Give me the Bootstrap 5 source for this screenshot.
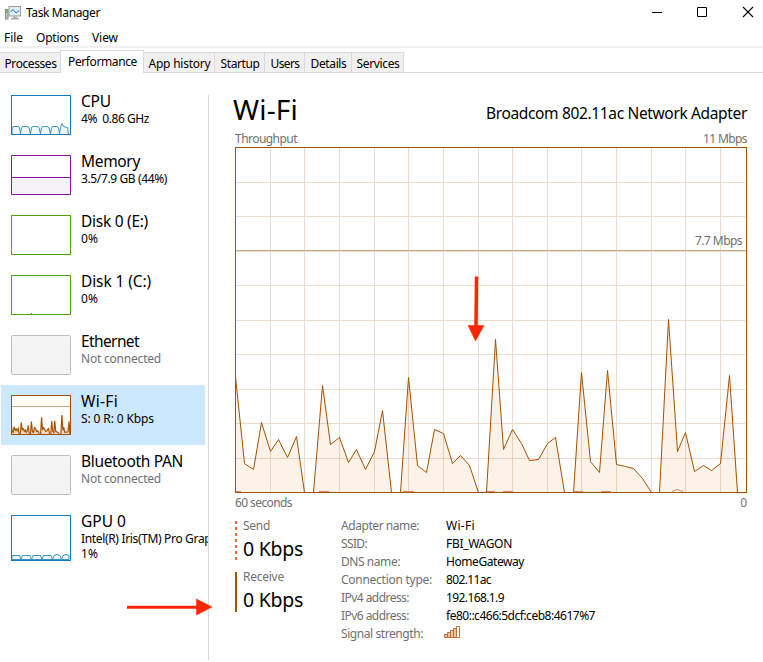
<!DOCTYPE html>
<html lang="en">
<head>
<meta charset="utf-8">
<meta name="viewport" content="width=device-width, initial-scale=1">
<title>Task Manager</title>
<link href="https://cdn.jsdelivr.net/npm/bootstrap@5.3.0/dist/css/bootstrap.min.css" rel="stylesheet">
<style>
body{font:12px/16px "Noto Sans","Open Sans",sans-serif;color:#000;background:#fff;width:763px;height:662px;overflow:hidden;position:relative}
svg{display:block;flex:none}
[data-w]{white-space:nowrap;display:inline-block}
.titlebar{height:24px;padding:0 0 0 5px}
.titlebar .app-icon{margin-top:2px}
.titlebar .app-name{margin-left:5px;padding-top:2px}
.win-buttons{gap:34px;padding-right:9px}
.menubar{height:24px;border-bottom:2px solid #f0f0f0;padding-left:4px;align-items:center;gap:13px;padding-top:6px}
.tabs{height:25px;border-bottom:1px solid #d9d9d9;align-items:flex-end}
.tabs .nav-link{padding:0 0 0 1px;height:20px;line-height:21px;color:#000;background:#f0f0f0;border:1px solid #d9d9d9;border-width:1px 1px 0 0;border-radius:0;text-align:center}
.tabs .nav-link.active{height:23px;background:#fff;margin-bottom:-1px;border-width:1px 1px 0 1px;margin-left:-1px}
.side{width:209px;height:565px;margin-top:22px;border-right:1px solid #d9d9d9;overflow:hidden}
.side .metric{height:60px;width:204px;margin-left:1px;padding-left:10px;gap:10px}
.metric.selected{background:#cce8ff}
.metric svg{margin-top:10px}
.metric-text{padding-top:7px}
.metric-name{font-size:15.5px;line-height:19px}
.metric-info{line-height:15px}
.side-wrap{margin-top:-10px}
.dim{color:#707070}
.main{margin-left:26px;width:512px}
.head{height:57px}
.big{font-size:28px;line-height:34px;margin-left:-2px}
.adapter{font-size:15.5px;line-height:20px;margin-bottom:3px}
.axis{height:17px;line-height:17px}
.chart{position:relative}
.chart .peak{position:absolute;right:5px;top:86px}
.below{height:19px;line-height:19px}
.rates{width:106px;padding-top:9px}
.rate{height:40px;padding-left:6px;margin-bottom:11px;border-left:2px solid #a65100}
.rate.send{border:0;padding-left:8px;background:repeating-linear-gradient(#e06f38 0 3px,transparent 3px 6px) 0 0/2px 100% no-repeat}
.rate .kind{line-height:9px}
.rate .speed{font-size:19.5px;line-height:24px;margin-top:7px}
.facts{padding-top:5px;grid-template-columns:105px auto;grid-auto-rows:18px;line-height:18px}
.signal{margin:1px 0 0 -2px}
.arrows{position:absolute;left:0;top:0;pointer-events:none}
</style>
<script src="https://cdn.jsdelivr.net/npm/bootstrap@5.3.0/dist/js/bootstrap.bundle.min.js"></script>
</head>
<body>
<header>
  <div class="titlebar d-flex align-items-center">
    <svg class="app-icon" width="16" height="16" viewBox="0 0 16 16"><rect x=".5" y="4.500" width="2.500" height="9.500" fill="#c8c8c8" stroke="#8b8b8b"/><path d="M1 6.500h2" stroke="#36d63a" stroke-width="2"/><rect x="4" y="1.500" width="11.500" height="9.500" fill="#e6e6e6" stroke="#9d9d9d"/><rect x="5.500" y="3" width="8.500" height="6.500" fill="#d9effb"/><path d="M5.500 7 8 4.500l3 3.500 3-2.500" fill="none" stroke="#237cae"/><path d="M8 11.500h4v1.500h2v1.500H6V13h2z" fill="#aaa"/></svg>
    <span class="app-name" data-w="73">Task Manager</span>
    <div class="win-buttons d-flex ms-auto">
      <svg width="12" height="12"><path d="M2 6.500h10" stroke="#000"/></svg>
      <svg width="12" height="12"><path d="M1.500 1.500h9v9h-9z" fill="none" stroke="#000"/></svg>
      <svg width="12" height="12"><path d="M1 1l10 10M11 1 1 11" stroke="#000" stroke-width="1.100"/></svg>
    </div>
  </div>
  <div class="menubar d-flex"><span data-w="18">File</span><span data-w="42">Options</span><span data-w="25">View</span></div>
  <nav class="nav tabs flex-nowrap">
    <a class="nav-link" style="width:61px"><span data-w="51">Processes</span></a>
    <a class="nav-link active" style="width:84px"><span data-w="68">Performance</span></a>
    <a class="nav-link" style="width:71px"><span data-w="61">App history</span></a>
    <a class="nav-link" style="width:50px"><span data-w="38">Startup</span></a>
    <a class="nav-link" style="width:40px"><span data-w="28">Users</span></a>
    <a class="nav-link" style="width:47px"><span data-w="35">Details</span></a>
    <a class="nav-link" style="width:52px"><span data-w="42">Services</span></a>
  </nav>
</header>
<div class="d-flex">
  <aside class="side"><div class="side-wrap">
    <div class="metric d-flex"><svg width="60" height="40"><path d="M1 32.500l2-1h4l1.500 1 1 6.500 1-6.500 1.500-1h4l2 1 1.500 6.500 1-6.500 1.500-1h4l2 1 1.500 6.500 1-6.500 1.500-1h4l2 1 1.500 6.500 1-6.500 1.500-1h4l1.500 1 1 6.500 1-6.500 1.500-4 1.500 3 4 1 1 7.500H1z" fill="#f1f6fa" stroke="#3a93c2"/><rect x=".5" y=".5" width="59" height="39" fill="none" stroke="#117dbb"/></svg>
      <div class="metric-text"><div class="metric-name"><span data-w="29">CPU</span></div><div class="metric-info"><span data-w="67">4%&nbsp; 0.86 GHz</span></div></div></div>
    <div class="metric d-flex"><svg width="60" height="40"><path d="M1 22.500h58v17H1z" fill="#f4f2f4"/><path d="M.5.500h59v39H.5zM1 22.500h58" fill="none" stroke="#8b12ae"/></svg>
      <div class="metric-text"><div class="metric-name"><span data-w="58">Memory</span></div><div class="metric-info"><span data-w="85">3.5/7.9 GB (44%)</span></div></div></div>
    <div class="metric d-flex"><svg width="60" height="40"><rect x=".5" y=".5" width="59" height="39" fill="#fff" stroke="#4da60c"/></svg>
      <div class="metric-text"><div class="metric-name"><span data-w="66">Disk 0 (E:)</span></div><div class="metric-info"><span data-w="16">0%</span></div></div></div>
    <div class="metric d-flex"><svg width="60" height="40"><rect x=".5" y=".5" width="59" height="39" fill="#fff" stroke="#4da60c"/><path d="M20 38.500h1" stroke="#4da60c"/></svg>
      <div class="metric-text"><div class="metric-name"><span data-w="69">Disk 1 (C:)</span></div><div class="metric-info"><span data-w="16">0%</span></div></div></div>
    <div class="metric d-flex"><svg width="60" height="40"><rect x=".5" y=".5" width="59" height="39" rx="1" fill="#f4f4f4" stroke="#bfbfbf"/></svg>
      <div class="metric-text"><div class="metric-name"><span data-w="57">Ethernet</span></div><div class="metric-info dim"><span data-w="79">Not connected</span></div></div></div>
    <div class="metric selected d-flex"><svg width="60" height="40"><rect width="60" height="40" fill="#fff"/><g transform="scale(.1174 .1156)"><use href="#traffic" fill="#f0d8c5" stroke="#a65100" stroke-width="10"/></g><path d="M1 11.500h58" stroke="#d3a682"/><rect x=".5" y=".5" width="59" height="39" fill="none" stroke="#a65100"/></svg>
      <div class="metric-text"><div class="metric-name"><span data-w="36">Wi-Fi</span></div><div class="metric-info"><span data-w="72">S: 0 R: 0 Kbps</span></div></div></div>
    <div class="metric d-flex"><svg width="60" height="40"><rect x=".5" y=".5" width="59" height="39" rx="1" fill="#f4f4f4" stroke="#bfbfbf"/></svg>
      <div class="metric-text"><div class="metric-name"><span data-w="101">Bluetooth PAN</span></div><div class="metric-info dim"><span data-w="79">Not connected</span></div></div></div>
    <div class="metric d-flex"><svg width="60" height="46"><path d="M1 40.500h7.500l1.500 4 1.500-4h7.500l1.500 4 1.500-4h7.500l1.500 4 1.500-4h7.500l1.500 4 1.500-4 3-1 3 1 1.500 4 1.500-4 3-1 3 1v4H1z" fill="#f1f6fa" stroke="#3a93c2"/><rect x=".5" y=".5" width="59" height="45" fill="none" stroke="#117dbb"/></svg>
      <div class="metric-text"><div class="metric-name"><span data-w="44">GPU 0</span></div><div class="metric-info"><span data-w="150">Intel(R) Iris(TM) Pro Graphics</span></div><div class="metric-info"><span data-w="16">1%</span></div></div></div>
  </div></aside>
  <main class="main">
    <div class="head d-flex justify-content-between align-items-end pb-1"><span class="big" data-w="64">Wi-Fi</span><span class="adapter" data-w="260">Broadcom 802.11ac Network Adapter</span></div>
    <div class="axis dim d-flex justify-content-between"><span data-w="61">Throughput</span><span data-w="43">11 Mbps</span></div>
    <div class="chart">
      <svg width="512" height="346">
        <defs><path id="traffic" transform="translate(-234.500 -146.500)" d="M235 376 244 463 253 469 261 422 270 451 278 439 287 457 296 436 304 492H313L322 385 330 444 339 437 348 462 356 449 365 469 374 451 382 410 391 492H400L408 377 417 465 426 472 434 429 443 433 452 463 460 455 469 465 478 492H486L495 339 503 449 512 429 521 443 529 460 538 459 547 443 555 437 564 492H573L581 372 590 461 599 472 607 370 616 464 625 466 633 468 642 478 651 492H659L668 319 677 451 685 432 694 471 703 465 711 470 720 463 729 375 737 492H235Z"/></defs>
        <path d="M35.500 1v344M69.500 1v344M104.500 1v344M139.500 1v344M173.500 1v344M208.500 1v344M243.500 1v344M277.500 1v344M312.500 1v344M346.500 1v344M381.500 1v344M416.500 1v344M450.500 1v344M485.500 1v344M1 35.500h509M1 69.500h509M1 104.500h509M1 138.500h509M1 173.500h509M1 207.500h509M1 242.500h509M1 276.500h509M1 311.500h509" stroke="#eadccf"/>
        <use href="#traffic" fill="#e07b22" fill-opacity=".1" stroke="#a65100"/>
        <path d="M1 103.500h510" stroke="#d3a682"/>
        <path d="M1 344.500h5m78 0h10m74 0h11m73 0h8m8 0h10m60 0h10m18 0h10m61 0 5-2 6 2" fill="none" stroke="#dc8560"/>
        <rect x=".5" y=".5" width="511" height="345" fill="none" stroke="#a65100"/>
      </svg>
      <span class="peak dim" data-w="46">7.7 Mbps</span>
    </div>
    <div class="below dim d-flex justify-content-between"><span data-w="56">60 seconds</span><span>0</span></div>
    <div class="d-flex">
      <div class="rates">
        <div class="rate send"><div class="kind dim"><span data-w="26">Send</span></div><div class="speed"><span data-w="59">0 Kbps</span></div></div>
        <div class="rate"><div class="kind dim"><span data-w="40">Receive</span></div><div class="speed"><span data-w="59">0 Kbps</span></div></div>
      </div>
      <div class="facts d-grid">
        <span class="dim"><span data-w="77">Adapter name:</span></span><span><span data-w="28">Wi-Fi</span></span>
        <span class="dim"><span data-w="25">SSID:</span></span><span><span data-w="65">FBI_WAGON</span></span>
        <span class="dim"><span data-w="58">DNS name:</span></span><span><span data-w="77">HomeGateway</span></span>
        <span class="dim"><span data-w="90">Connection type:</span></span><span><span data-w="44">802.11ac</span></span>
        <span class="dim"><span data-w="67">IPv4 address:</span></span><span><span data-w="57">192.168.1.9</span></span>
        <span class="dim"><span data-w="67">IPv6 address:</span></span><span><span data-w="148">fe80::c466:5dcf:ceb8:4617%7</span></span>
        <span class="dim"><span data-w="81">Signal strength:</span></span>
        <svg class="signal" width="16" height="12"><path d="M.5 8.500h3v3h-3zM3.500 6.500h3v5h-3zM6.500 4.500h3v7h-3zM9.500 2.500h3v9h-3z" fill="#e2c3aa" stroke="#b9723a"/><path d="M12.500.5h3v11h-3z" fill="#fff" stroke="#b9723a"/></svg>
      </div>
    </div>
  </main>
</div>
<svg class="arrows" width="763" height="662"><g fill="#ff2600" stroke="#ff2600"><path d="M476.500 276.500 476 326" stroke-width="3.500"/><path d="M468 325.500h16l-8.500 15.500z" stroke-width=".5"/><path d="M127 607.300h70" stroke-width="3"/><path d="M196.500 599v16l15.500-8z" stroke-width=".5"/></g></svg>
<script>
// Track each label so that it takes its nominal width.
document.querySelectorAll('[data-w]').forEach(function (el) {
  var want = +el.dataset.w, have = el.getBoundingClientRect().width;
  el.style.letterSpacing = ((want - have + 1) / el.textContent.length).toFixed(3) + 'px';
});
</script>
</body>
</html>
